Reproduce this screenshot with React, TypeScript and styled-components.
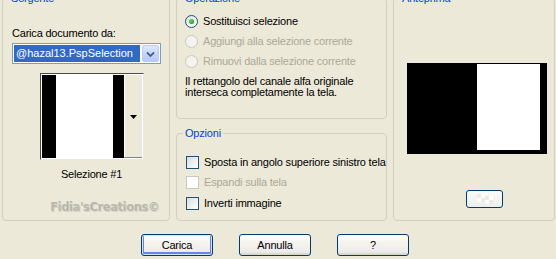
import styled, { createGlobalStyle } from "styled-components";

const GlobalStyle = createGlobalStyle`
  html, body {
    margin: 0;
    padding: 0;
    background: #ece9d8;
    overflow: hidden;
  }
  body {
    font-family: "Liberation Sans", Arial, sans-serif;
    font-size: 11px;
    letter-spacing: -0.2px;
    color: #000;
  }
`;

const Dialog = styled.div`
  width: 556px;
  height: 259px;
  padding: 1px 0 0 2px;
  box-sizing: border-box;
`;

const TopRow = styled.div`
  display: flex;
  height: 229px;
  margin-top: -9px;
`;

const Group = styled.fieldset<{ $width?: number; $grow?: boolean }>`
  margin: 0;
  padding: 0;
  min-width: 0;
  box-sizing: border-box;
  border: 1px solid #d0d0bf;
  border-radius: 4px;
  width: ${(p) => (p.$width ? `${p.$width}px` : "auto")};
  flex: ${(p) => (p.$grow ? "1" : "none")};
`;

const Legend = styled.legend`
  color: #0046d5;
  padding: 0 2px;
  margin-left: 6px;
  line-height: 13px;
`;

const Body = styled.div<{ $pad?: string }>`
  display: flex;
  flex-direction: column;
  padding: ${(p) => p.$pad || "0"};
`;

const Label = styled.div<{ $mt?: number; $disabled?: boolean }>`
  line-height: 13px;
  margin-top: ${(p) => p.$mt ?? 0}px;
  color: ${(p) => (p.$disabled ? "#aca899" : "#000")};
`;

const Combo = styled.div`
  margin-top: 3px;
  width: 149px;
  height: 21px;
  box-sizing: border-box;
  border: 1px solid #7f9db9;
  background: #fff;
  display: flex;
  align-items: stretch;
  padding: 1px;
  gap: 2px;
`;

const ComboText = styled.div`
  flex: 1;
  background: #316ac5;
  color: #fff;
  line-height: 17px;
  padding-left: 2px;
  letter-spacing: 0;
`;

const ComboButton = styled.div`
  width: 15px;
  border: 1px solid #bccdf5;
  border-radius: 2px;
  background: linear-gradient(180deg, #dde7fd 0%, #c3d4fa 60%, #b6caf6 100%);
  display: flex;
  align-items: center;
  justify-content: center;
`;

const SwatchFrame = styled.div`
  margin-top: 9px;
  align-self: center;
  margin-left: 2px;
  width: 104px;
  height: 87px;
  box-sizing: border-box;
  border: 1px solid #4a4a4a;
  border-right-color: #e8e8e8;
  border-bottom-color: #e8e8e8;
  background: #fff;
  padding: 1px;
  display: flex;
`;

const SwatchImage = styled.div`
  display: flex;
  flex: none;
`;

const Strip = styled.div<{ $w: number; $c: string }>`
  width: ${(p) => p.$w}px;
  background: ${(p) => p.$c};
`;

const SwatchDrop = styled.div`
  flex: 1;
  background: #ece9d8;
  border-left: 1px solid #fff;
  border-bottom: 1px solid #808080;
  display: flex;
  align-items: center;
  justify-content: center;
  padding-top: 2px;
`;

const Caption = styled.div`
  align-self: center;
  margin-top: 8px;
  margin-left: 2px;
  line-height: 13px;
`;

const Watermark = styled.div`
  align-self: flex-end;
  margin: 19px 10px 0 0;
  font-family: "DejaVu Sans", sans-serif;
  font-weight: bold;
  font-size: 11.5px;
  letter-spacing: -0.4px;
  color: #bab7ab;
  text-shadow: 1px 1px 0 #d8d5c8;
  line-height: 14px;
`;

const MiddleColumn = styled.div`
  width: 211px;
  margin-left: 6px;
  display: flex;
  flex-direction: column;
  gap: 8px;
`;

const OptionRow = styled.div<{ $h: number }>`
  display: flex;
  align-items: center;
  gap: 5px;
  height: ${(p) => p.$h}px;
`;

const Radio = styled.span<{ $checked?: boolean; $disabled?: boolean }>`
  width: 13px;
  height: 13px;
  box-sizing: border-box;
  border-radius: 50%;
  border: 1px solid ${(p) => (p.$disabled ? "#cac8bb" : "#1c5180")};
  background: ${(p) =>
    p.$disabled
      ? "#f4f3ee"
      : "linear-gradient(135deg, #dcdcd7 0%, #f4f4f1 55%, #ffffff 100%)"};
  display: flex;
  align-items: center;
  justify-content: center;

  &::after {
    content: "";
    display: ${(p) => (p.$checked ? "block" : "none")};
    width: 5px;
    height: 5px;
    border-radius: 50%;
    background: radial-gradient(circle at 35% 35%, #5ee15e 0%, #21a121 70%);
  }
`;

const Check = styled.span<{ $disabled?: boolean }>`
  width: 13px;
  height: 13px;
  box-sizing: border-box;
  border: 1px solid ${(p) => (p.$disabled ? "#cac8bb" : "#1c5180")};
  background: ${(p) =>
    p.$disabled
      ? "#fff"
      : "linear-gradient(135deg, #dcdcd7 0%, #f0f0ec 55%, #ffffff 100%)"};
`;

const Note = styled.div`
  margin-top: 5px;
  line-height: 11px;
`;

const Preview = styled.div`
  margin: 58px 0 0 13px;
  width: 140px;
  height: 91px;
  background: #000;
  display: flex;
  align-items: flex-start;
`;

const PreviewWhite = styled.div`
  margin: 1px 0 0 70px;
  width: 63px;
  height: 86px;
  background: #fff;
`;

const ZoomButton = styled.div`
  margin: 36px 0 0 72px;
  width: 37px;
  height: 18px;
  box-sizing: border-box;
  border: 1px solid #003c74;
  border-radius: 3px;
  background:
    conic-gradient(#ffffff 25%, #ebebe7 0 50%, #ffffff 0 75%, #ebebe7 0) 10px 3px / 8px 8px no-repeat,
    conic-gradient(#ffffff 25%, #ebebe7 0 50%, #ffffff 0 75%, #ebebe7 0) 18px 5px / 8px 8px no-repeat,
    linear-gradient(180deg, #fbfbf9 0%, #eeeeea 100%);
`;

const ButtonRow = styled.div`
  display: flex;
  gap: 26px;
  margin: 13px 0 0 139px;
`;

const Button = styled.button<{ $default?: boolean }>`
  width: 72px;
  height: 22px;
  box-sizing: border-box;
  border: 1px solid #003c74;
  border-radius: 3px;
  background: linear-gradient(180deg, #ffffff 0%, #f4f3ee 40%, #ecebe6 85%, #d6d0c5 100%);
  font-family: "Liberation Sans", Arial, sans-serif;
  font-size: 11px;
  line-height: 13px;
  letter-spacing: -0.2px;
  color: #000;
  padding: 0;
  box-shadow: ${(p) =>
    p.$default ? "inset 0 0 0 1px #cee7ff, inset 0 -1px 0 2px #6982ee" : "none"};
`;

const radios = [
  { text: "Sostituisci selezione", checked: true, disabled: false },
  { text: "Aggiungi alla selezione corrente", checked: false, disabled: true },
  { text: "Rimuovi dalla selezione corrente", checked: false, disabled: true },
];

const checks = [
  { text: "Sposta in angolo superiore sinistro tela", disabled: false, h: 20 },
  { text: "Espandi sulla tela", disabled: true, h: 21 },
  { text: "Inverti immagine", disabled: false, h: 21 },
];

const App = () => {
  return (
    <Dialog>
      <GlobalStyle />
      <TopRow>
        <Group $width={168}>
          <Legend>Sorgente</Legend>
          <Body $pad="0 0 0 9px">
            <Label $mt={22}>Carica documento da:</Label>
            <Combo>
              <ComboText>@hazal13.PspSelection</ComboText>
              <ComboButton>
                <svg width="9" height="6" viewBox="0 0 9 6">
                  <path d="M1 1.5 L4.5 5 L8 1.5" fill="none" stroke="#4d6185" strokeWidth="1.8" />
                </svg>
              </ComboButton>
            </Combo>
            <SwatchFrame>
              <SwatchImage>
                <Strip $w={14} $c="#000" />
                <Strip $w={57} $c="#fff" />
                <Strip $w={11} $c="#000" />
              </SwatchImage>
              <SwatchDrop>
                <svg width="7" height="4" viewBox="0 0 7 4">
                  <path d="M0 0 H7 L3.5 4 Z" fill="#000" />
                </svg>
              </SwatchDrop>
            </SwatchFrame>
            <Caption>Selezione #1</Caption>
            <Watermark>Fidia'sCreations©</Watermark>
          </Body>
        </Group>

        <MiddleColumn>
          <Group style={{ height: 127 }}>
            <Legend>Operazione</Legend>
            <Body $pad="6px 0 0 8px">
              {radios.map((r) => (
                <OptionRow key={r.text} $h={20}>
                  <Radio $checked={r.checked} $disabled={r.disabled} />
                  <Label $disabled={r.disabled}>{r.text}</Label>
                </OptionRow>
              ))}
              <Note>
                Il rettangolo del canale alfa originale
                <br />
                interseca completamente la tela.
              </Note>
            </Body>
          </Group>
          <Group $grow>
            <Legend>Opzioni</Legend>
            <Body $pad="12px 0 0 9px">
              {checks.map((c) => (
                <OptionRow key={c.text} $h={c.h}>
                  <Check $disabled={c.disabled} />
                  <Label $disabled={c.disabled}>{c.text}</Label>
                </OptionRow>
              ))}
            </Body>
          </Group>
        </MiddleColumn>

        <Group $width={162} style={{ marginLeft: 6 }}>
          <Legend>Anteprima</Legend>
          <Preview>
            <PreviewWhite />
          </Preview>
          <ZoomButton />
        </Group>
      </TopRow>

      <ButtonRow>
        <Button $default>Carica</Button>
        <Button>Annulla</Button>
        <Button>?</Button>
      </ButtonRow>
    </Dialog>
  );
};

export default App;
